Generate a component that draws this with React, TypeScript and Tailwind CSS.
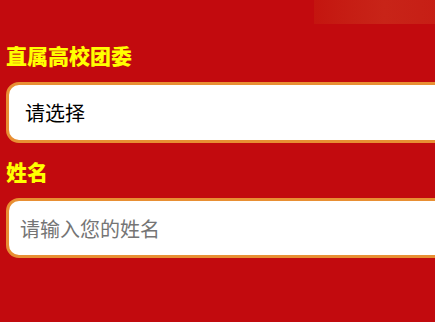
import React from 'react';

// ─── Form field ───────────────────────────────────────────────────────────────

function Field({ label, children }: { label: string; children: React.ReactNode }) {
  return (
    <div className="flex flex-col">
      <label className="text-[21px] leading-[28px] font-black text-[#ffff00] mb-[13px]">{label}</label>
      {children}
    </div>
  );
}

export default function App() {
  return (
    <div
      className="relative w-[435px] h-[322px] overflow-hidden bg-[#c20a0e]"
      style={{ fontFamily: '"Noto Sans CJK SC", "Noto Sans", sans-serif' }}
    >
      {/* faint banner bleed at the top right */}
      <div
        className="absolute top-0 left-[314px] w-[140px] h-[24px] bg-gradient-to-r from-[#c4150f] via-[#c82418] to-[#c61c14]"
        aria-hidden
      />

      <div className="relative flex flex-col pt-[41px] pl-[6px]">
        <Field label="直属高校团委">
          <div className="w-[470px] h-[61px] rounded-[13px] border-[3px] border-[#e88f33] bg-white flex items-center pl-[16px] text-[20px] text-black">
            请选择
          </div>
        </Field>

        <div className="h-[14px]" />

        <Field label="姓名">
          <input
            className="w-[470px] h-[60px] rounded-[13px] border-[3px] border-[#e88f33] bg-white pl-[11px] text-[20px] text-black placeholder:text-[#757575] outline-none"
            placeholder="请输入您的姓名"
          />
        </Field>
      </div>
    </div>
  );
}
